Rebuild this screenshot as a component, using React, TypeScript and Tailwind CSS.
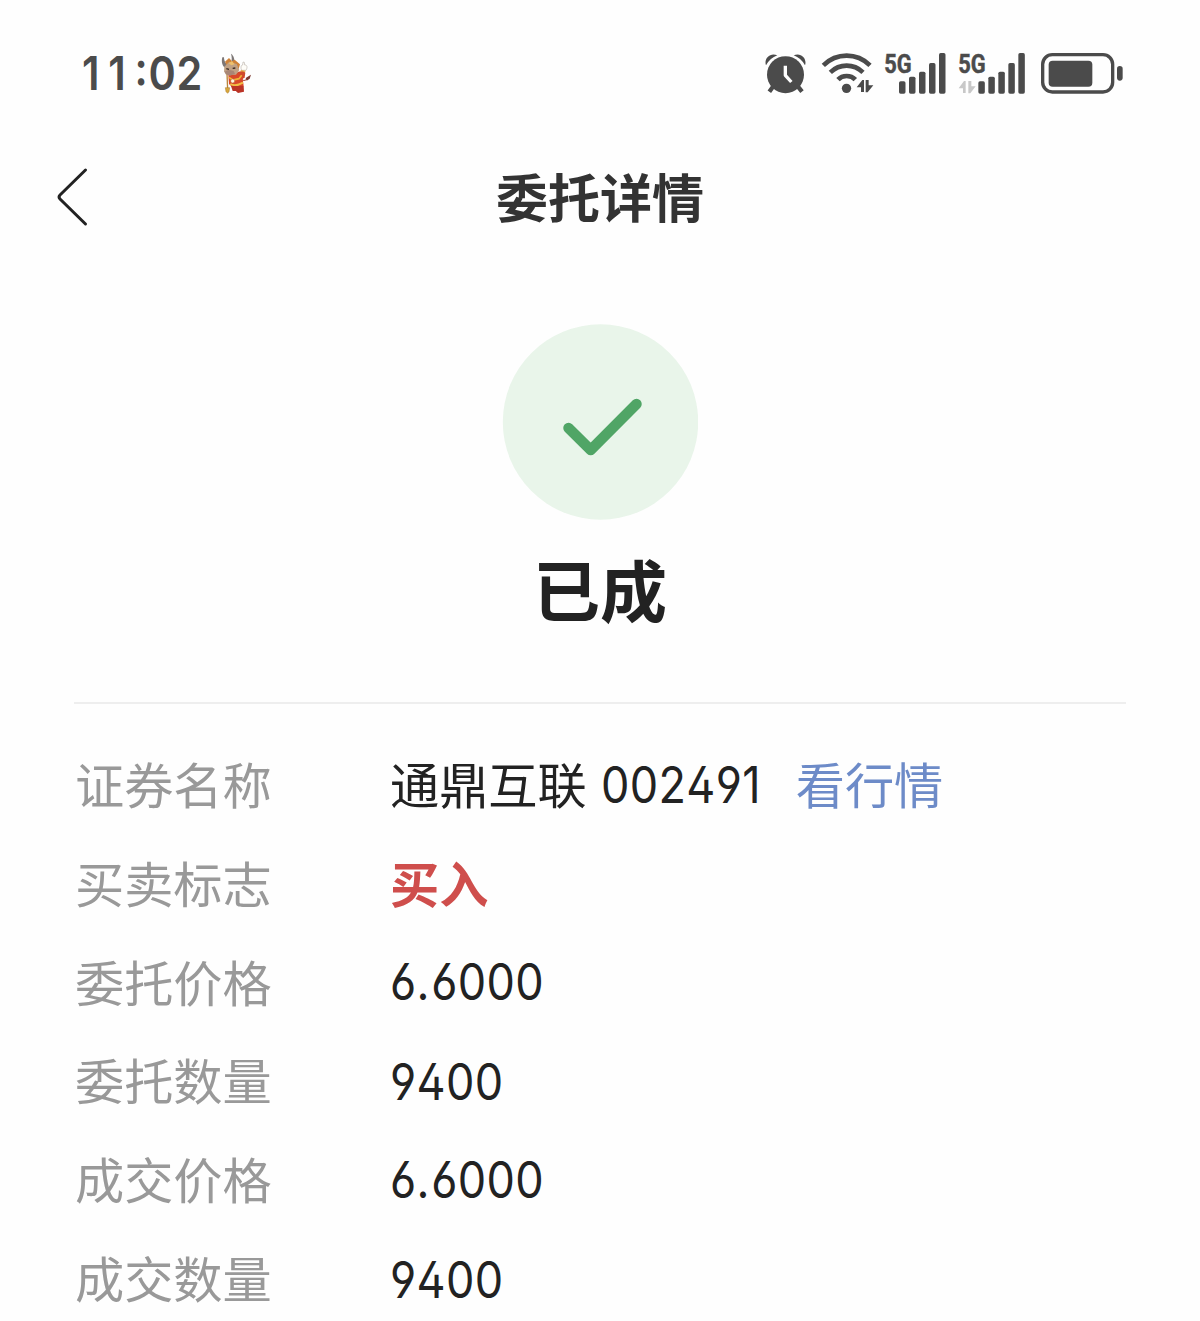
import React from "react";

const CJK = "font-['Noto_Sans_CJK_SC',sans-serif]";
const NUM = "inline-block origin-left font-['Inter',sans-serif] [font-feature-settings:'ss01','case','calt'_0,'kern'_0]";

function Mascot() {
  return (
    <svg className="h-[42px] w-[32px]" viewBox="456 36 96 126" aria-hidden="true">
      <path d="M474 100l2 50" stroke="#b9853a" strokeWidth="4" fill="none" />
      <path d="M469 143h13l-2 12-4 5-5-5z" fill="#d8a83c" stroke="#a8772c" strokeWidth="1.5" />
      <path d="M520 120c8 4 14-2 17-9" stroke="#9b2a20" strokeWidth="3" fill="none" />
      <path d="M530 114l16-10-4 12-9 6z" fill="#7d3a30" />
      <path d="M505 96l18-4 6 6-2 14-12 10-10-6z" fill="#cf4a2a" />
      <path d="M478 104l12-6h22l8 10 4 30-10 6-24-2-10-10z" fill="#d8482a" />
      <path d="M480 112l12 8 18-4 8-10" stroke="#f0b436" strokeWidth="5" fill="none" />
      <path d="M484 132c10 6 24 4 38-4" stroke="#f1bd45" strokeWidth="6" fill="none" />
      <circle cx="491" cy="123" r="6" fill="#fff3df" stroke="#b66c3a" strokeWidth="1.5" />
      <path d="M486 138h18l-1 14-12 1zM503 138h21l1 17-18 4-6-5z" fill="#bb3326" />
      <path d="M460 52c-4 14 0 29 12 33l8-9c-9-3-15-12-15-24z" fill="#7d7776" />
      <path d="M486 41c9 6 12 19 9 31l-9-4c3-7 3-17 0-27z" fill="#7d7776" />
      <path d="M468 65l12-11 9 10 8-5 16 14-4 14-14-10-20 3z" fill="#cf8238" />
      <path d="M466 80l15-15 22 7 8 18-10 14-26 1-10-10z" fill="#c0a184" />
      <path d="M479 70l10-7 8 10-10 3z" fill="#edc06d" />
      <path d="M467 95l12-6 15 4 4 8-15 6-13-4z" fill="#a88676" />
      <path d="M472 86l8 2M491 85l8-1" stroke="#352620" strokeWidth="4" />
      <path d="M518 91c-4-8-2-17 3-16l1-9 4 1 1 8c8-1 9 8 4 16z" fill="#fffdf8" stroke="#b5ada5" strokeWidth="1.8" />
      <path d="M515 92l14 2" stroke="#e5ae42" strokeWidth="4" />
    </svg>
  );
}

function AlarmIcon() {
  return (
    <svg className="h-[42px] w-[42px]" viewBox="42 36 126 126" aria-hidden="true">
      <path d="M72 136L58 155M141 136l15 19" fill="none" stroke="#4b4b4b" strokeWidth="13" />
      <path d="M48 76C41 56 60 36 82 46Q60 54 48 76zM165 76C172 56 153 36 131 46Q153 54 165 76z" fill="#4b4b4b" />
      <circle cx="106.500" cy="104" r="55.500" fill="#4b4b4b" />
      <path d="M106 77v29l18 20" fill="none" stroke="#fff" strokeWidth="10" strokeLinejoin="round" />
    </svg>
  );
}

function WifiIcon() {
  return (
    <svg className="h-[42px] w-[55px]" viewBox="210 36 165 126" aria-hidden="true">
      <g fill="none" stroke="#4b4b4b" strokeWidth="14">
        <path d="M220 76Q250 47 290 47Q330 47 360 76" />
        <path d="M241 97Q262 77 290 77Q318 77 339 97" />
        <path d="M264 119Q274 108 290 108Q306 108 316 119" />
      </g>
      <circle cx="289.500" cy="145" r="14" fill="#4b4b4b" />
      <path d="M342 156V120h-5l-17 22h13v14zM347 120v37h6l17-21h-14v-16z" fill="#4b4b4b" />
    </svg>
  );
}

function NetworkLabel({ x }: { x: number }) {
  return (
    <g transform={`translate(${x} 98) scale(.82 1)`}>
      <text className="font-['Roboto',sans-serif] text-[80px] font-bold" fill="#4b4b4b" stroke="#4b4b4b" strokeWidth="1.5">5G</text>
    </g>
  );
}

function Bars({ x }: { x: number }) {
  const tops = [124, 110, 95, 69, 39];
  return (
    <g fill="#4b4b4b">
      {tops.map((top, i) => (
        <rect key={top} x={x + i * 30} y={top} width="19.500" height={161 - top} rx="5" />
      ))}
    </g>
  );
}

function BatteryIcon() {
  return (
    <svg className="h-[42px] w-[84px]" viewBox="300 36 252 126" aria-hidden="true">
      <rect x="308" y="44" width="210" height="112" rx="29" fill="none" stroke="#4b4b4b" strokeWidth="10" />
      <rect x="326" y="62" width="131" height="78" rx="12" fill="#4b4b4b" />
      <rect x="531" y="78" width="17" height="44" rx="8.500" fill="#4b4b4b" />
    </svg>
  );
}

function StatusBar() {
  return (
    <div className="flex h-[94px] shrink-0 items-end justify-between pl-[82px] pr-[76px] text-[#4b4b4b]">
      <div className="flex h-[42px] items-center">
        <div className="w-[139px] whitespace-nowrap">
          <span className={`${NUM} scale-x-[0.88] text-[47px] font-semibold leading-[42px]`}>
            <span className="tracking-[10px]">11</span>
            <span className="tracking-[0.8px]">:02</span>
          </span>
        </div>
        <Mascot />
      </div>
      <div className="flex items-center">
        <AlarmIcon />
        <div className="ml-[14px]"><WifiIcon /></div>
        <svg className="ml-[9px] h-[42px] w-[63px] overflow-visible" viewBox="402 36 189 126" aria-hidden="true">
          <NetworkLabel x={403} />
          <Bars x={447} />
        </svg>
        <svg className="ml-[11px] h-[42px] w-[68px] overflow-visible" viewBox="54 36 204 126" aria-hidden="true">
          <NetworkLabel x={55} />
          <path d="M77 159V123h-5l-16 22h13v14zM85 123v37h6l16-21H94v-16z" fill="#c8c8c8" />
          <Bars x={115} />
        </svg>
        <div className="ml-[14px]"><BatteryIcon /></div>
      </div>
    </div>
  );
}

function Row({ label, children }: { label: string; children: React.ReactNode }) {
  return (
    <div className="flex h-[98.700px] shrink-0 items-center">
      <dt className="w-[315px] shrink-0 whitespace-nowrap text-[#999]">{label}</dt>
      <dd className="flex items-center whitespace-nowrap text-[#222]">{children}</dd>
    </div>
  );
}

function Value({ children }: { children: string }) {
  return <span className={`${NUM} scale-x-[0.9] text-[50px] tracking-[0.4px]`}>{children}</span>;
}

function Price({ children }: { children: string }) {
  const [whole, fraction] = children.split(".");
  return (
    <span className={`${NUM} mt-[3px] scale-x-[0.9] text-[50px] tracking-[0.4px]`}>
      {whole}
      <span className="tracking-[2px]">.</span>
      {fraction}
    </span>
  );
}

function Quantity({ children }: { children: string }) {
  return <span className="mt-[3px]"><Value>{children}</Value></span>;
}

export default function App() {
  return (
    <main className={`flex h-[1321px] w-[1200px] flex-col overflow-hidden bg-[#fefefe] ${CJK}`}>
      <StatusBar />
      <header className="mt-[53px] grid h-[98px] shrink-0 grid-cols-[1fr_auto_1fr] items-center px-[54px]">
        <svg className="mt-[2px] h-[62px] w-[36px]" viewBox="0 0 36 62" fill="none" stroke="#222" strokeWidth="3" strokeLinecap="round" strokeLinejoin="round" aria-label="返回">
          <path d="M31.500 4L6 29Q4 31 6 33L31.500 58" />
        </svg>
        <h1 className="text-[52px] font-bold leading-[98px] text-[#333]">委托详情</h1>
      </header>
      <section className="mt-[79px] flex shrink-0 flex-col items-center">
        <svg className="h-[196px] w-[196px]" viewBox="0 0 196 196" aria-hidden="true">
          <circle cx="98.500" cy="98" r="97.700" fill="#e9f5ea" />
          <path d="M66.500 104L88.700 126L134.500 80" fill="none" stroke="#50a566" strokeWidth="10.500" strokeLinecap="round" strokeLinejoin="round" />
        </svg>
        <h2 className="mt-[20px] text-[67px] font-bold leading-[96px] text-[#222]">已成</h2>
      </section>
      <hr className="mx-[74px] mt-[66px] shrink-0 border-0 border-t-2 border-[#eeeeee]" />
      <dl className="mt-[30px] flex flex-col pl-[75px] text-[49.200px] leading-[72px]">
        <Row label="证券名称">
          <span>通鼎互联</span>
          <span className="ml-[14px] w-[195px]"><Value>002491</Value></span>
          <a className="text-[#6d8bc8]">看行情</a>
        </Row>
        <Row label="买卖标志"><span className="font-bold text-[#cf4e4c]">买入</span></Row>
        <Row label="委托价格"><Price>6.6000</Price></Row>
        <Row label="委托数量"><Quantity>9400</Quantity></Row>
        <Row label="成交价格"><Price>6.6000</Price></Row>
        <Row label="成交数量"><Quantity>9400</Quantity></Row>
      </dl>
    </main>
  );
}
